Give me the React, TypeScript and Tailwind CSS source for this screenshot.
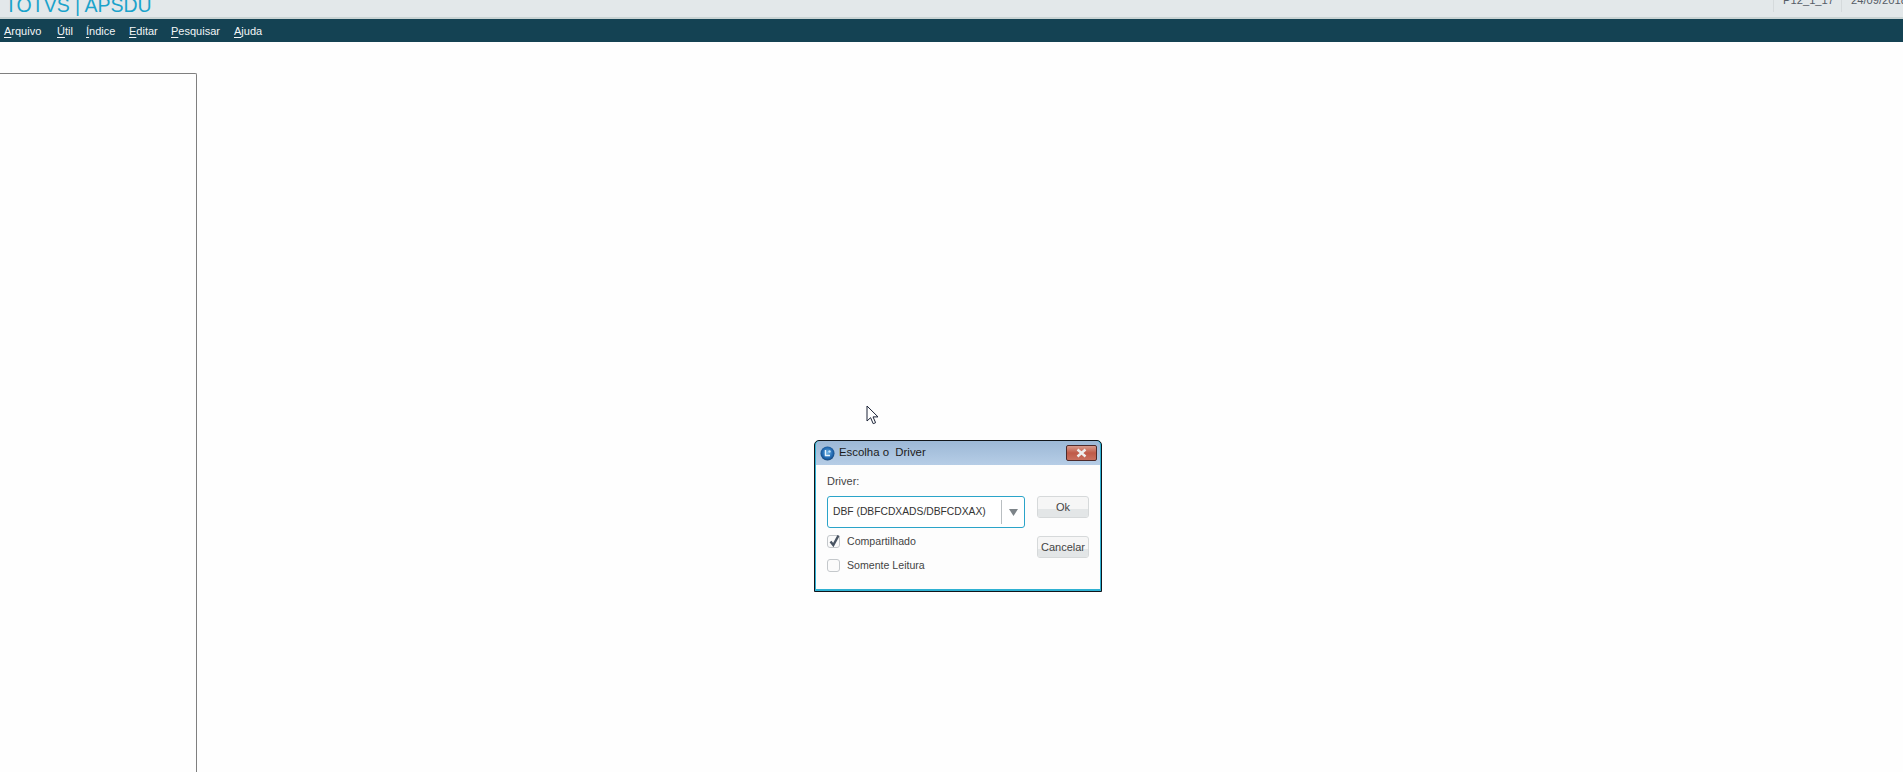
// App.tsx - TOTVS APSDU com dialogo de escolha do driver
const FONT = { fontFamily: '"Liberation Sans", Arial, sans-serif' };

const menus = [
  { first: 'A', rest: 'rquivo', w: 'w-[53px]' },
  { first: 'Ú', rest: 'til', w: 'w-[29px]' },
  { first: 'Í', rest: 'ndice', w: 'w-[43px]' },
  { first: 'E', rest: 'ditar', w: 'w-[42px]' },
  { first: 'P', rest: 'esquisar', w: 'w-[63px]' },
  { first: 'A', rest: 'juda', w: 'w-[40px]' },
];

function AppIcon() {
  return (
    <svg width="15" height="15" viewBox="0 0 15 15" className="flex-none">
      <defs>
        <radialGradient id="globe" cx="50%" cy="45%" r="60%">
          <stop offset="0%" stopColor="#6fb4e6" />
          <stop offset="65%" stopColor="#1f66ae" />
          <stop offset="100%" stopColor="#123a66" />
        </radialGradient>
      </defs>
      <circle cx="7.5" cy="7.5" r="7" fill="url(#globe)" />
      <path d="M5.5 4v5.5h4.5" fill="none" stroke="#e8f3fc" strokeWidth="1.4" />
      <circle cx="9.5" cy="5.5" r="1.2" fill="#bfe0f8" />
    </svg>
  );
}

function Cursor() {
  return (
    <svg width="13" height="20" viewBox="0 0 13 20" className="absolute left-[866px] top-[405px]">
      <path
        d="M1 1v15l3.6-3.3 2.6 6 2.4-1-2.6-5.8h5z"
        fill="#fff"
        stroke="#1c2438"
        strokeWidth="1"
        strokeLinejoin="round"
      />
    </svg>
  );
}

function Checkbox({ checked, label }: { checked?: boolean; label: string }) {
  return (
    <div className="flex items-center h-[24px]">
      <div className="relative w-[13px] h-[13px] rounded-[3px] border border-[#c4c8cb] bg-[#fbfbfb]">
        {checked && (
          <svg width="13" height="14" viewBox="0 0 13 14" className="absolute left-0 -top-[2px]">
            <path d="M2.5 7.5 5.3 11 10.5 1.5" fill="none" stroke="#4a5563" strokeWidth="2.4" />
          </svg>
        )}
      </div>
      <span className="ml-[7px] text-[10.6px] leading-none text-[#444]">{label}</span>
    </div>
  );
}

function DialogButton({ label }: { label: string }) {
  return (
    <div className="relative w-[52px] h-[22px] rounded-[3px] border border-[#d6d9da] bg-[#f6f6f6] overflow-hidden flex items-center justify-center">
      <div className="absolute left-0 right-0 bottom-0 h-[8px] bg-[#e3e6e7]" />
      <span className="relative text-[11px] leading-none text-[#444]">{label}</span>
    </div>
  );
}

function DriverDialog() {
  return (
    <div className="absolute left-[814px] top-[440px] w-[288px] h-[152px] border border-[#10151a] rounded-t-[5px] bg-[#2fb1d2] p-[1px] pt-0 pb-[2px] flex flex-col overflow-hidden">
      <div className="h-[24px] flex-none flex items-center pl-[4px] pr-[3px] bg-gradient-to-b from-[#9cb8d6] to-[#b6cde6] rounded-t-[4px]">
        <AppIcon />
        <span className="ml-[4px] text-[11.4px] leading-none text-[#1b1b1b] whitespace-pre">Escolha o  Driver</span>
        <div className="ml-auto w-[31px] h-[16px] rounded-[2px] border border-[#4d2a2a] bg-gradient-to-b from-[#d89a8c] via-[#bf5a48] to-[#c9705f] flex items-center justify-center">
          <svg width="13" height="10" viewBox="0 0 13 10">
            <path d="M2.5 1.5l8 7M10.5 1.5l-8 7" stroke="#eeeeee" strokeWidth="2.4" />
          </svg>
        </div>
      </div>
      <div className="flex-1 bg-[#fdfdfd] pl-[11px] pr-[12px] pt-[10px] flex">
        <div className="w-[198px] flex-none">
          <div className="text-[11px] leading-[13px] text-[#444]">Driver:</div>
          <div className="mt-[8px] h-[32px] rounded-[3px] border border-[#2ba4c9] bg-white flex items-center">
            <span className="flex-1 pl-[5px] text-[10.3px] leading-none text-[#333] whitespace-nowrap">DBF (DBFCDXADS/DBFCDXAX)</span>
            <div className="w-[23px] h-[24px] border-l border-[#b9bec1] pl-[1px] flex items-center justify-center">
              <svg width="9" height="7" viewBox="0 0 9 7">
                <path d="M0 0h9L4.5 7z" fill="#7d8489" />
              </svg>
            </div>
          </div>
          <div className="mt-[1px]">
            <Checkbox checked label="Compartilhado" />
            <Checkbox label="Somente Leitura" />
          </div>
        </div>
        <div className="ml-[12px] pt-[21px] flex flex-col gap-[18px]">
          <DialogButton label="Ok" />
          <DialogButton label="Cancelar" />
        </div>
      </div>
    </div>
  );
}

export default function App() {
  return (
    <div className="relative h-screen flex flex-col bg-[#fefefe] overflow-hidden" style={FONT}>
      <header className="flex-none h-[19px] bg-[#e3e8ea] border-b-2 border-[#c9d3d3] flex justify-between overflow-hidden">
        <div className="-mt-[6px] text-[19.5px] leading-[23px] text-[#1ba3cb] whitespace-nowrap pl-[5px]">
          TOTVS | APSDU
        </div>
        <div className="flex text-[11.2px] leading-none text-[#555c66]">
          <div className="w-[68px] h-[12px] border-l border-[#d5dadc] pl-[9px]">
            <span className="block -mt-[5px] whitespace-nowrap">P12_1_17</span>
          </div>
          <div className="w-[62px] h-[12px] border-l border-[#d5dadc] pl-[9px] overflow-hidden">
            <span className="block -mt-[5px] whitespace-nowrap">24/09/2018</span>
          </div>
        </div>
      </header>

      <nav className="flex-none h-[23px] bg-[#144253] flex items-center pl-[4px] pt-[1px] text-[11px] text-[#f2f5f6]">
        {menus.map((m, i) => (
          <div key={i} className={m.w}>
            <span className="underline decoration-[#f2f5f6] underline-offset-2">{m.first}</span>
            {m.rest}
          </div>
        ))}
      </nav>

      <main className="flex-1 pt-[31px]">
        <div className="w-[197px] h-full border-t border-r border-[#7f7f7f] rounded-tr-[2px]" />
      </main>

      <Cursor />
      <DriverDialog />
    </div>
  );
}
